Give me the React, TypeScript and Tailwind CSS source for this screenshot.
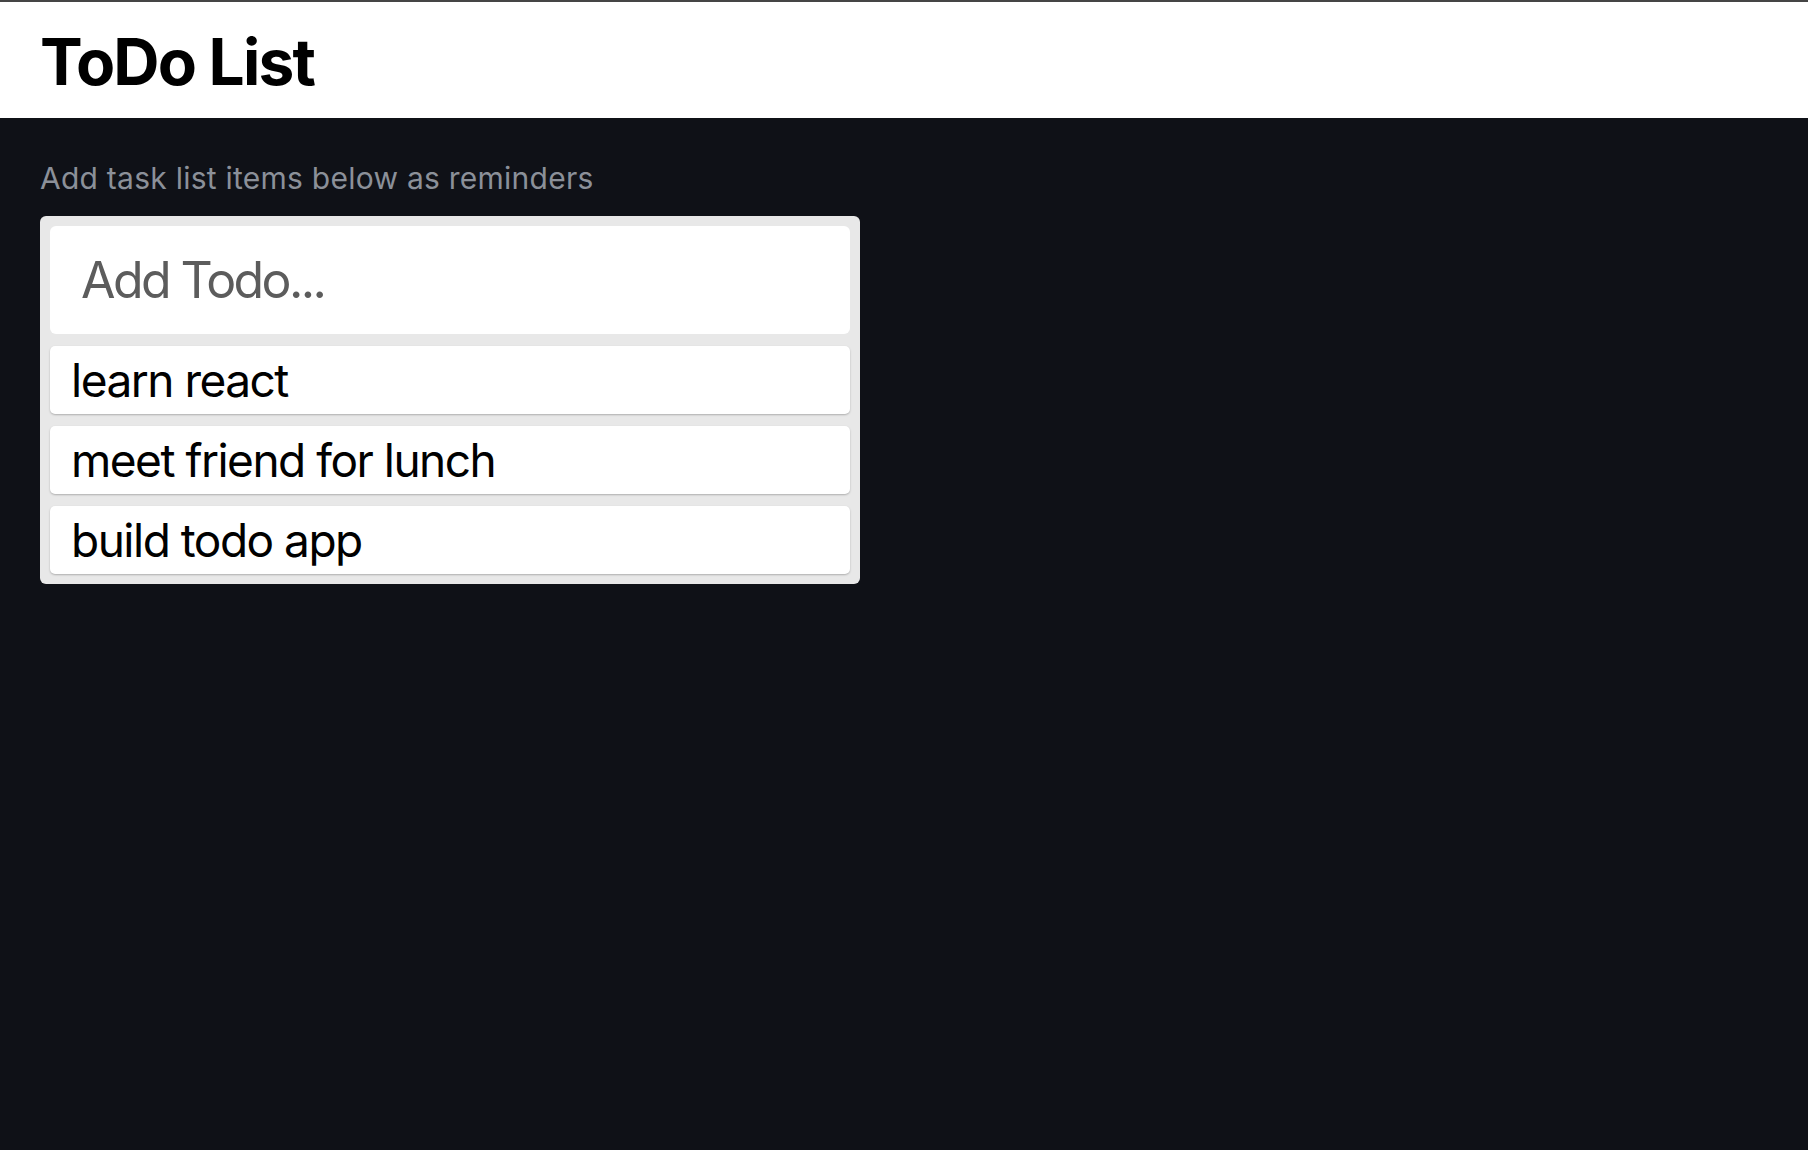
import { useState } from "react";

const initialTodos = ["learn react", "meet friend for lunch", "build todo app"];

function TodoItem({ text }: { text: string }) {
  return (
    <li className="flex h-[68px] items-center rounded-[5px] bg-white pl-[21px] text-[46px] tracking-[-1.5px] text-black shadow-[0_1px_2px_rgba(0,0,0,0.25)]">
      {text}
    </li>
  );
}

export default function App() {
  const [todos, setTodos] = useState(initialTodos);
  const [draft, setDraft] = useState("");

  const addTodo = (e: React.FormEvent) => {
    e.preventDefault();
    if (!draft.trim()) return;
    setTodos([...todos, draft.trim()]);
    setDraft("");
  };

  return (
    <div
      className="min-h-screen border-t-2 border-[#454545] bg-[#0f1117]"
      style={{ fontFamily: "Inter, 'Noto Sans', sans-serif" }}
    >
      <header className="flex h-[116px] items-center bg-white px-[40px] pt-[3px]">
        <h1 className="text-[64px] font-bold tracking-[-1.8px] text-black">ToDo List</h1>
      </header>

      <main className="px-[40px] pt-[42px]">
        <p className="text-[30px] leading-[36px] tracking-[0.25px] text-[#8b9099]">
          Add task list items below as reminders
        </p>

        <div className="mt-[20px] flex w-[820px] flex-col gap-[12px] rounded-[6px] bg-[#e8e8e8] p-[10px]">
          <form onSubmit={addTodo}>
            <input
              value={draft}
              onChange={(e) => setDraft(e.target.value)}
              placeholder="Add Todo..."
              className="h-[108px] w-full rounded-[6px] bg-white pl-[31px] text-[50px] tracking-[-2.6px] text-black outline-none placeholder:text-[#5c5c5c]"
            />
          </form>
          <ul className="flex flex-col gap-[12px]">
            {todos.map((t, i) => (
              <TodoItem key={i} text={t} />
            ))}
          </ul>
        </div>
      </main>
    </div>
  );
}
